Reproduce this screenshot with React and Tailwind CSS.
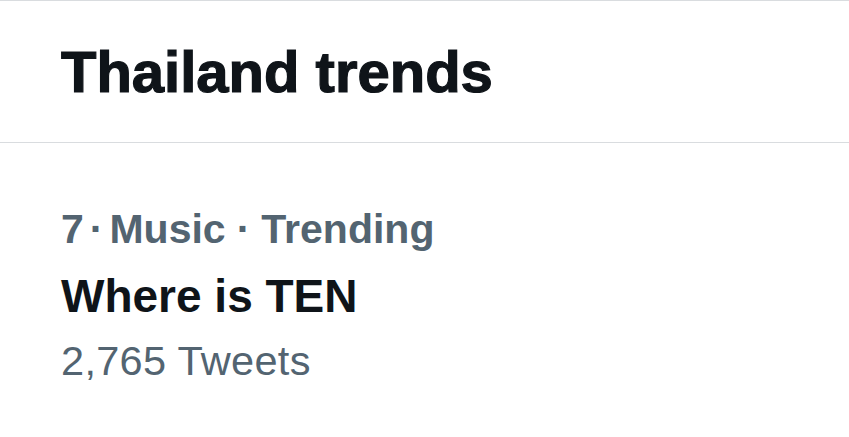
import React from "react";

// Single trend entry shown under the section header
const trend = {
  rank: 7,
  category: "Music",
  name: "Where is TEN",
  count: "2,765 Tweets",
};

const App = () => {
  return (
    <div
      className="w-[849px] h-[437px] bg-white overflow-hidden border-t border-[#d9dcdf]"
      style={{ fontFamily: '"Liberation Sans", Arial, sans-serif' }}
    >
      {/* Section header */}
      <div className="pl-[61px] pt-[42px] pb-[41px] border-b border-[#d9dcdf]">
        <h2 className="text-[58px] leading-[58px] font-bold text-[#0f1419] [-webkit-text-stroke:1.2px_#0f1419]">
          Thailand trends
        </h2>
      </div>

      {/* Trend row */}
      <div className="pl-[61px] pt-[54px]">
        <div className="text-[41px] leading-[64px] font-bold text-[#536471]">
          {trend.rank}
          <span className="mx-[6px]">·</span>
          {trend.category}
          <span className="mx-[11px]">·</span>
          Trending
        </div>
        <div className="text-[46px] leading-[70px] font-bold text-[#0f1419]">
          {trend.name}
        </div>
        <div className="text-[41.5px] leading-[60px] text-[#536471] tracking-[0.3px]">
          {trend.count}
        </div>
      </div>
    </div>
  );
};

export default App;
